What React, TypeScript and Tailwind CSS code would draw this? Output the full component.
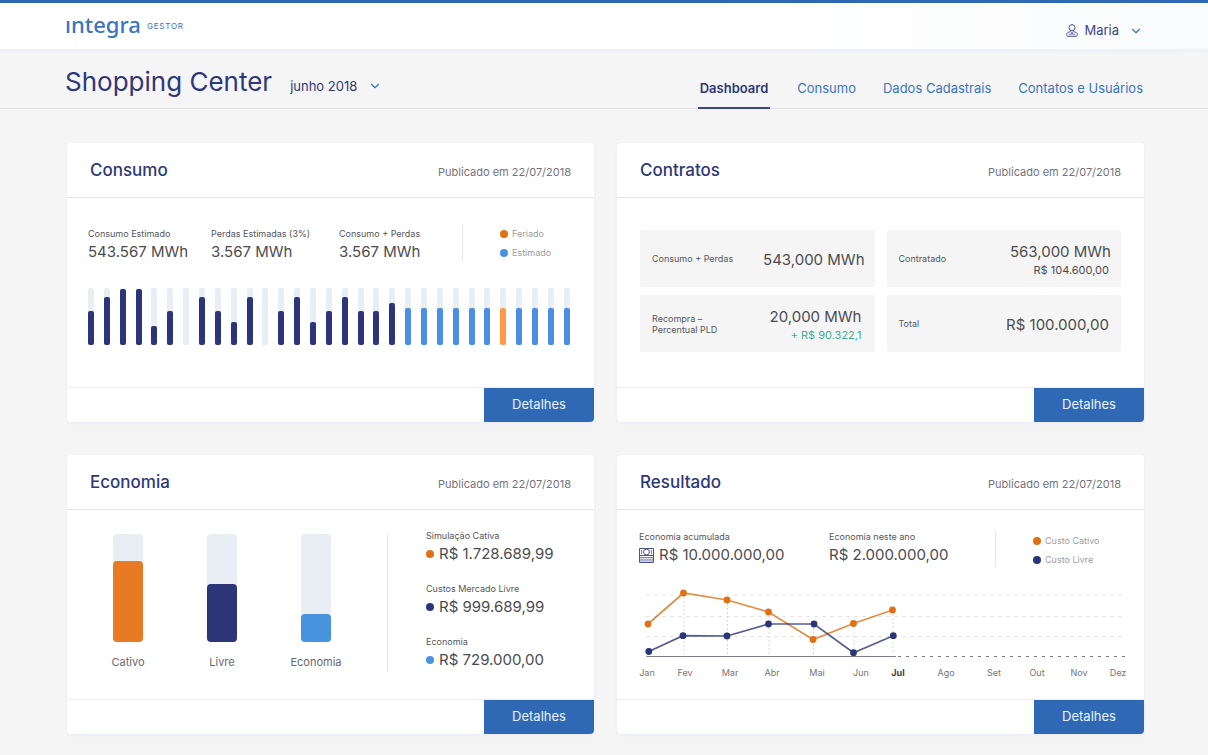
import { ReactNode, useState } from "react";
import { ChevronDown } from "lucide-react";

const navItems = ["Dashboard", "Consumo", "Dados Cadastrais", "Contatos e Usuários"];

type BarKind = "real" | "estimado" | "feriado";

interface DayBar {
  value: number;
  kind: BarKind;
}

const real = [34, 48, 56, 56, 19, 34, 0, 48, 34, 23, 48, 0, 34, 48, 23, 34, 48, 34, 34, 42];

const dayBars: DayBar[] = [
  ...real.map((value) => ({ value, kind: "real" as BarKind })),
  ...Array.from({ length: 11 }, (_, i) => ({
    value: 37,
    kind: (i === 6 ? "feriado" : "estimado") as BarKind,
  })),
];

const barColor: Record<BarKind, string> = {
  real: "bg-[#2b3577]",
  estimado: "bg-[#4a90e2]",
  feriado: "bg-[#ff9a4a]",
};

const months = [
  { label: "Jan", x: 9 },
  { label: "Fev", x: 47 },
  { label: "Mar", x: 92 },
  { label: "Abr", x: 134 },
  { label: "Mai", x: 179 },
  { label: "Jun", x: 223 },
  { label: "Jul", x: 260 },
  { label: "Ago", x: 308 },
  { label: "Set", x: 356 },
  { label: "Out", x: 399 },
  { label: "Nov", x: 441 },
  { label: "Dez", x: 480 },
];

const cativo = [
  [10, 40],
  [45.5, 9],
  [89, 16],
  [130.5, 28],
  [175, 55.5],
  [215.5, 39.5],
  [254.5, 26],
];

const livre = [
  [10.8, 67.5],
  [45, 51.7],
  [89, 52],
  [130.5, 40],
  [176, 40],
  [215.5, 68.7],
  [255.3, 51.7],
];

const UserIcon = () => (
  <svg width="12" height="13" viewBox="0 0 12 13" fill="none" stroke="#4a5391">
    <circle cx="6" cy="3.6" r="3" />
    <path d="M4.6 6.4v1.2L6 8.8l1.4-1.2V6.4" strokeWidth="0.8" />
    <path d="M4.4 7.8C2 8 .6 8.9.6 10.6c0 1 .5 1.7 1.4 1.7h8c.9 0 1.4-.7 1.4-1.7 0-1.7-1.4-2.6-3.8-2.8" />
    <path d="M2.6 10.3h2.2L6 9.4l1.2.9h2.2M6 9v1.8" strokeWidth="0.8" />
  </svg>
);

const MoneyIcon = () => (
  <svg width="15" height="15" viewBox="0 0 15 15" fill="none" stroke="#4a5391">
    <path d="M.5.5h14v14H.5zM.5 7.5h14" />
    <path d="M.5 9.5h14M.5 11.2h14M.5 12.9h14" strokeWidth="0.7" />
    <circle cx="7.5" cy="4" r="2.9" />
    <path d="M2.6 1.8v4.4M12.4 1.8v4.4" strokeWidth="0.8" />
  </svg>
);

const Dot = ({ className }: { className: string }) => (
  <span className={`size-2 shrink-0 rounded-full ${className}`} />
);

const Card = ({ title, children }: { title: string; children: ReactNode }) => (
  <section className="flex flex-col overflow-hidden rounded-sm bg-white shadow-[0_1px_3px_#e6eaf4]">
    <header className="flex h-[55px] items-center justify-between border-b border-[#e4e5ea] px-[23px]">
      <h2 className="pt-[2px] text-[17px] font-medium text-[#2e3878]">{title}</h2>
      <span className="pt-1 text-[11px] text-[#74747c]">Publicado em 22/07/2018</span>
    </header>
    <div className="h-[189px]">{children}</div>
    <footer className="flex h-[35px] justify-end border-t border-[#eceef2]">
      <button className="w-[110px] bg-[#2f69b5] text-[13px] text-[#eaf1fb]">Detalhes</button>
    </footer>
  </section>
);

const Stat = ({ label, value, icon }: { label: string; value: string; icon?: ReactNode }) => (
  <div>
    <div className="text-[9px] leading-3 text-[#55555a]">{label}</div>
    <div className="flex items-center gap-[5px] text-[15px] leading-6 text-[#4c4c4f]">
      {icon}
      {value}
    </div>
  </div>
);

const Legend = ({ items }: { items: { color: string; label: string }[] }) => (
  <ul className="flex flex-col gap-[7px] text-[9px] leading-3 text-[#9c9ca2]">
    {items.map((item) => (
      <li key={item.label} className="flex items-center gap-1">
        <Dot className={item.color} />
        {item.label}
      </li>
    ))}
  </ul>
);

const ConsumoCard = () => (
  <Card title="Consumo">
    <div className="pt-[26px] pr-6 pl-[21px]">
      <div className="flex h-9">
        <div className="w-[123px] pt-1">
          <Stat label="Consumo Estimado" value="543.567 MWh" />
        </div>
        <div className="w-32 pt-1">
          <Stat label="Perdas Estimadas (3%)" value="3.567 MWh" />
        </div>
        <div className="w-[123px] pt-1">
          <Stat label="Consumo + Perdas" value="3.567 MWh" />
        </div>
        <div className="h-9 border-l border-[#e4e5ea] pt-1 pl-[37px]">
          <Legend
            items={[
              { color: "bg-[#e17014]", label: "Feriado" },
              { color: "bg-[#4a90e2]", label: "Estimado" },
            ]}
          />
        </div>
      </div>
      <div className="mt-7 flex h-[57px] justify-between">
        {dayBars.map((bar, i) => (
          <div key={i} className="flex w-[6px] items-end rounded-xs bg-[#e9eef5]">
            <div
              className={`w-full rounded-xs ${barColor[bar.kind]}`}
              style={{ height: bar.value }}
            />
          </div>
        ))}
      </div>
    </div>
  </Card>
);

const ContractBox = ({ label, children }: { label: ReactNode; children: ReactNode }) => (
  <div className="flex h-[57px] items-center justify-between rounded-xs bg-[#f5f5f5] pr-[10px] pl-3">
    <span className="text-[9px] leading-[11px] text-[#55555a]">{label}</span>
    <div className="pt-[2px] text-right text-[15px] leading-5 text-[#4c4c4f]">{children}</div>
  </div>
);

const ContratosCard = () => (
  <Card title="Contratos">
    <div className="grid grid-cols-2 gap-x-3 gap-y-2 pt-8 pr-[23px] pl-[23px]">
      <ContractBox label="Consumo + Perdas">543,000 MWh</ContractBox>
      <ContractBox label="Contratado">
        563,000 MWh
        <div className="pr-[2px] text-[11px] leading-4">R$ 104.600,00</div>
      </ContractBox>
      <ContractBox
        label={
          <>
            Recompra –<br />
            Percentual PLD
          </>
        }
      >
        <div className="pr-[3px]">20,000 MWh</div>
        <div className="pr-[3px] text-[11px] leading-4 text-[#3fae97]">+ R$ 90.322,1</div>
      </ContractBox>
      <ContractBox label="Total">
        <div className="pr-[2px]">R$ 100.000,00</div>
      </ContractBox>
    </div>
  </Card>
);

const economia = [
  { label: "Cativo", value: 81, color: "bg-[#e87a24]" },
  { label: "Livre", value: 58, color: "bg-[#2b3577]" },
  { label: "Economia", value: 28, color: "bg-[#4893dd]" },
];

const EconomiaCard = () => (
  <Card title="Economia">
    <div className="flex items-start pt-5 pl-[14px]">
      <div className="flex w-[306px] pt-1">
        {economia.map((item) => (
          <div key={item.label} className="flex w-[94px] flex-col items-center">
            <div className="flex h-[108px] w-[30px] items-end rounded-sm bg-[#e9eef5]">
              <div
                className={`w-full rounded-sm ${item.color}`}
                style={{ height: item.value }}
              />
            </div>
            <span className="mt-3 text-[11px] leading-4 text-[#68686c]">{item.label}</span>
          </div>
        ))}
      </div>
      <div className="mt-1 h-[138px] w-px bg-[#e4e5ea]" />
      <div className="flex flex-col gap-[17px] pl-[38px]">
        <Stat
          label="Simulação Cativa"
          value="R$ 1.728.689,99"
          icon={<Dot className="bg-[#e17014]" />}
        />
        <Stat
          label="Custos Mercado Livre"
          value="R$ 999.689,99"
          icon={<Dot className="bg-[#2b3577]" />}
        />
        <Stat
          label="Economia"
          value="R$ 729.000,00"
          icon={<Dot className="bg-[#4893dd]" />}
        />
      </div>
    </div>
  </Card>
);

const LineSeries = ({ points, color }: { points: number[][]; color: string }) => (
  <g>
    <polyline
      points={points.map((p) => p.join(",")).join(" ")}
      fill="none"
      stroke={color}
      strokeWidth="1.7"
      strokeOpacity="0.8"
    />
    {points.map(([x, y]) => (
      <circle key={x} cx={x} cy={y} r="3.4" fill={color} />
    ))}
  </g>
);

const ResultadoChart = () => (
  <svg viewBox="0 0 490 98" className="mt-[17px] block w-full" role="img" aria-label="Resultado">
    {[11, 32.5, 52.5].map((y) => (
      <path key={y} d={`M8.5 ${y}H488`} stroke="#dddde0" strokeDasharray="3 5" />
    ))}
    {cativo.slice(1).map(([x, y], i) => (
      <path
        key={x}
        d={`M${x + 0.5} ${Math.min(y, livre[i + 1][1])}V70`}
        stroke="#d4d4e2"
        strokeDasharray="2 2"
      />
    ))}
    <path d="M8.5 72.5H258" stroke="#7d7a88" />
    <path d="M260 72.5H488" stroke="#77777c" strokeDasharray="3 5" />
    <LineSeries points={cativo} color="#e17014" />
    <LineSeries points={livre} color="#2b3577" />
    {months.map(({ label, x }) => (
      <text
        key={label}
        x={x}
        y="92"
        textAnchor="middle"
        className={
          label === "Jul"
            ? "fill-[#3e3e42] text-[9px] font-bold"
            : "fill-[#74747a] text-[9px]"
        }
      >
        {label}
      </text>
    ))}
  </svg>
);

const ResultadoCard = () => (
  <Card title="Resultado">
    <div className="pt-[21px] pr-4 pl-[21px]">
      <div className="flex h-9 pl-px">
        <div className="w-[190px]">
          <Stat label="Economia acumulada" value="R$ 10.000.000,00" icon={<MoneyIcon />} />
        </div>
        <div className="w-[166px]">
          <Stat label="Economia neste ano" value="R$ 2.000.000,00" />
        </div>
        <div className="h-9 border-l border-[#e4e5ea] pt-1 pl-[37px]">
          <Legend
            items={[
              { color: "bg-[#e17014]", label: "Custo Cativo" },
              { color: "bg-[#2b3577]", label: "Custo Livre" },
            ]}
          />
        </div>
      </div>
      <ResultadoChart />
    </div>
  </Card>
);

export default function App() {
  const [active, setActive] = useState("Dashboard");
  const [month, setMonth] = useState("junho 2018");

  return (
    <div className="min-h-screen bg-[#f5f5f6] pb-5 font-['Inter',sans-serif]">
      <header className="flex h-[52px] items-center justify-between border-t-3 border-b-3 border-t-[#2f69b5] border-b-[#eef0f7] bg-white bg-linear-to-r from-white from-60% to-[#fafbfc] px-[65px]">
        <a href="#" className="flex items-center gap-[6px] pb-1 text-[#3a76c0]">
          <span className="font-['Noto_Sans',sans-serif] text-[22px] leading-7 font-medium">
            ıntegra
          </span>
          <span className="pt-1 text-[8px] tracking-widest">GESTOR</span>
        </a>
        <button className="flex items-center gap-[6px] pt-[9px] text-[13px] text-[#3b4587]">
          <UserIcon />
          Maria
          <ChevronDown size={14} className="ml-1 text-[#3a76c0]" />
        </button>
      </header>

      <div className="flex h-[57px] items-end justify-between border-b border-[#e2e2e5] px-[65px]">
        <div className="flex items-baseline gap-[18px] pb-2 text-[#2e3878]">
          <h1 className="text-[26px] leading-9">Shopping Center</h1>
          <div className="relative">
            <select
              aria-label="Mês"
              value={month}
              onChange={(e) => setMonth(e.target.value)}
              className="appearance-none bg-transparent pr-6 text-[13px]"
            >
              <option>junho 2018</option>
            </select>
            <ChevronDown
              size={14}
              className="pointer-events-none absolute right-0 bottom-1 text-[#3a76c0]"
            />
          </div>
        </div>
        <nav className="-mb-px flex gap-[27px] text-[13px]">
          {navItems.map((item) => (
            <a
              key={item}
              href="#"
              onClick={() => setActive(item)}
              className={
                item === active
                  ? "border-b-2 border-[#3b4587] px-[2px] pb-[9px] font-semibold text-[#2e3878]"
                  : "border-b-2 border-transparent pb-[9px] text-[#3a76c0]"
              }
            >
              {item}
            </a>
          ))}
        </nav>
      </div>

      <main className="grid grid-cols-2 gap-x-[23px] gap-y-[33px] pt-[34px] pr-16 pl-[67px]">
        <ConsumoCard />
        <ContratosCard />
        <EconomiaCard />
        <ResultadoCard />
      </main>
    </div>
  );
}
